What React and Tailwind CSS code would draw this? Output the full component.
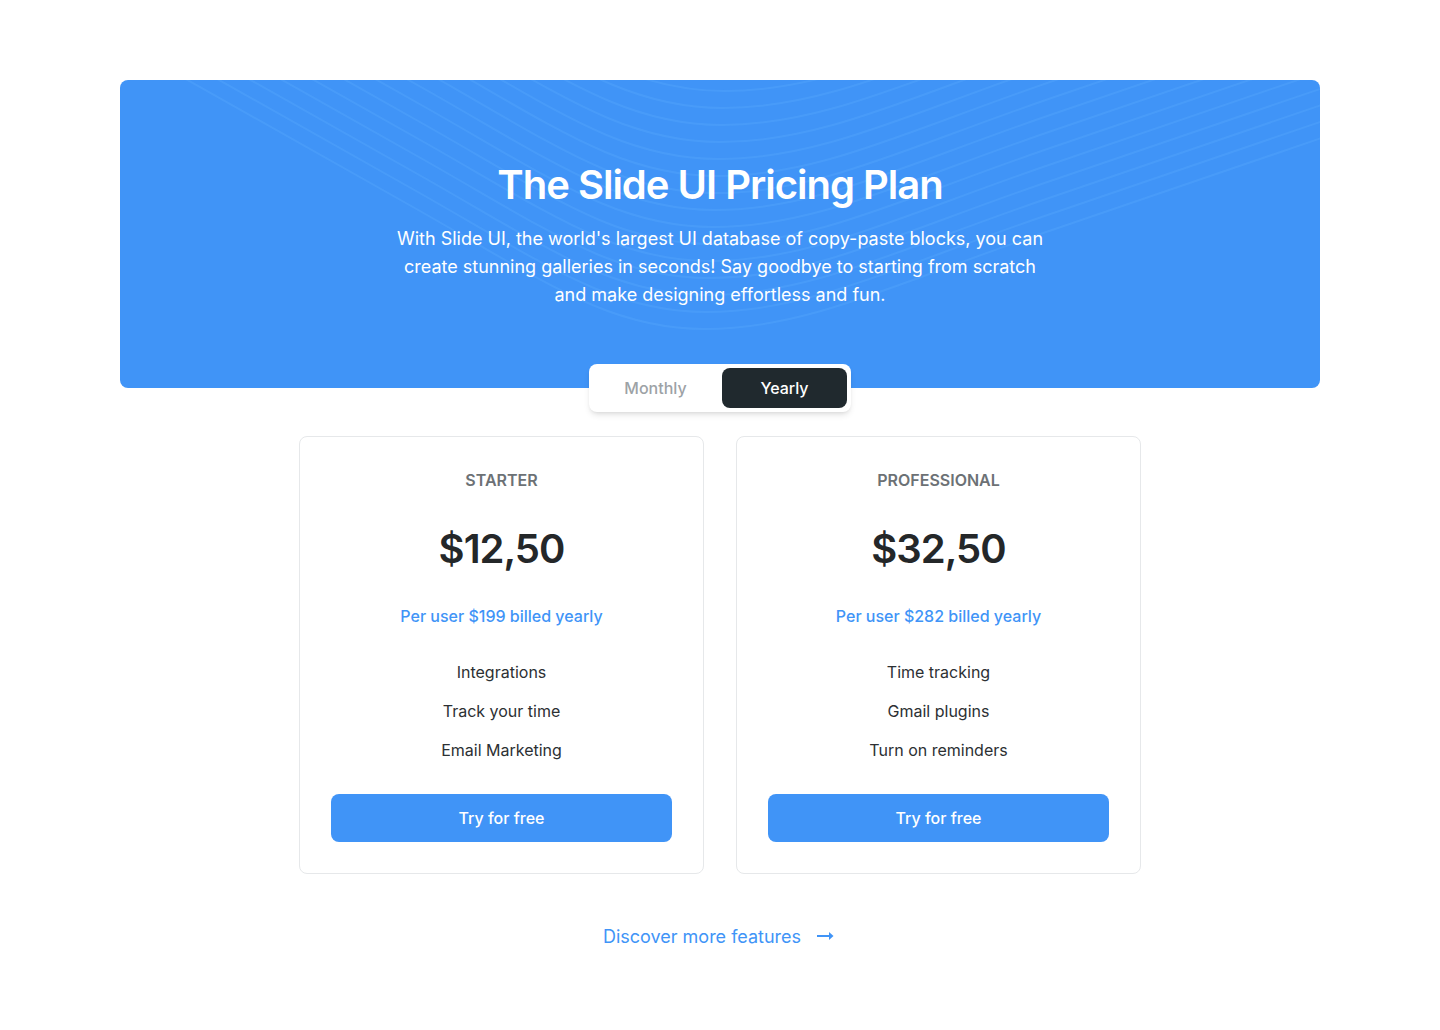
import { useState } from "react";

const WAVES = Array.from({ length: 15 }, (_, i) => i);

const PLANS = [
  {
    name: "STARTER",
    price: "$12,50",
    billing: "Per user $199 billed yearly",
    features: ["Integrations", "Track your time", "Email Marketing"],
  },
  {
    name: "PROFESSIONAL",
    price: "$32,50",
    billing: "Per user $282 billed yearly",
    features: ["Time tracking", "Gmail plugins", "Turn on reminders"],
  },
];

function Waves() {
  return (
    <svg
      className="pointer-events-none absolute inset-0 h-full w-full"
      viewBox="0 0 1200 308"
      preserveAspectRatio="xMidYMin slice"
      fill="none"
      aria-hidden="true"
    >
      {WAVES.map((i) => (
        <path
          key={i}
          d="M-110 -100 L300 131 C425 202 490 249 585 249 C690 249 780 201 935 149 L1960 -201"
          transform={`translate(${i * 1.4} ${i * -17})`}
          stroke="#5fb0ff"
          strokeOpacity="0.28"
          strokeWidth="2"
        />
      ))}
    </svg>
  );
}

function PeriodToggle() {
  const [period, setPeriod] = useState("Yearly");
  return (
    <div className="relative mx-auto -mt-6 flex w-[262px] gap-1 rounded-lg bg-white p-1 shadow-md">
      {["Monthly", "Yearly"].map((p) => (
        <button
          key={p}
          type="button"
          aria-pressed={period === p}
          onClick={() => setPeriod(p)}
          className={
            period === p
              ? "h-10 flex-1 rounded-lg bg-[#20292e] font-medium text-white"
              : "h-10 flex-1 rounded-lg font-medium text-[#9da2a6]"
          }
        >
          {p}
        </button>
      ))}
    </div>
  );
}

function PlanCard({ plan }) {
  return (
    <section className="flex flex-col rounded-lg border border-[#e6e8ea] p-[31px] text-center">
      <h2 className="font-semibold text-[#6c7175]">{plan.name}</h2>
      <p className="mt-8 text-[40px] leading-[50px] font-semibold tracking-tight text-[#242729]">
        {plan.price}
      </p>
      <p className="mt-[30px] font-medium text-[#4094f7]">{plan.billing}</p>
      <ul className="mt-8 flex flex-col gap-[15px] text-[#2c3033]">
        {plan.features.map((f) => (
          <li key={f}>{f}</li>
        ))}
      </ul>
      <button type="button" className="mt-8 h-12 rounded-lg bg-[#4094f7] font-medium text-white">
        Try for free
      </button>
    </section>
  );
}

export default function App() {
  return (
    <main className="min-h-screen bg-white px-6 py-20 font-['Inter',sans-serif] text-base">
      <div className="mx-auto max-w-[1200px]">
        <header className="relative overflow-hidden rounded-lg bg-[#4094f7] px-6 pt-20 pb-[79px] text-center text-white">
          <Waves />
          <h1 className="relative text-[40px] leading-[50px] font-semibold tracking-tight">
            The Slide UI Pricing Plan
          </h1>
          <p className="relative mx-auto mt-[15px] max-w-[660px] text-lg leading-7">
            With Slide UI, the world's largest UI database of copy-paste blocks, you can create
            stunning galleries in seconds! Say goodbye to starting from scratch and make designing
            effortless and fun.
          </p>
        </header>
        <PeriodToggle />
        <div className="mx-auto mt-6 grid max-w-[842px] gap-8 md:grid-cols-2">
          {PLANS.map((plan) => (
            <PlanCard key={plan.name} plan={plan} />
          ))}
        </div>
        <div className="mt-[49px] flex justify-center">
          <a href="#features" className="flex items-center gap-4 text-lg leading-7 text-[#4094f7]">
            Discover more features
            <svg width="20" height="20" viewBox="0 0 20 20" fill="none" aria-hidden="true">
              <path d="M0 9H13" stroke="currentColor" strokeWidth="2" />
              <path d="M12 5L16.5 9L12 13Z" fill="currentColor" />
            </svg>
          </a>
        </div>
      </div>
    </main>
  );
}
